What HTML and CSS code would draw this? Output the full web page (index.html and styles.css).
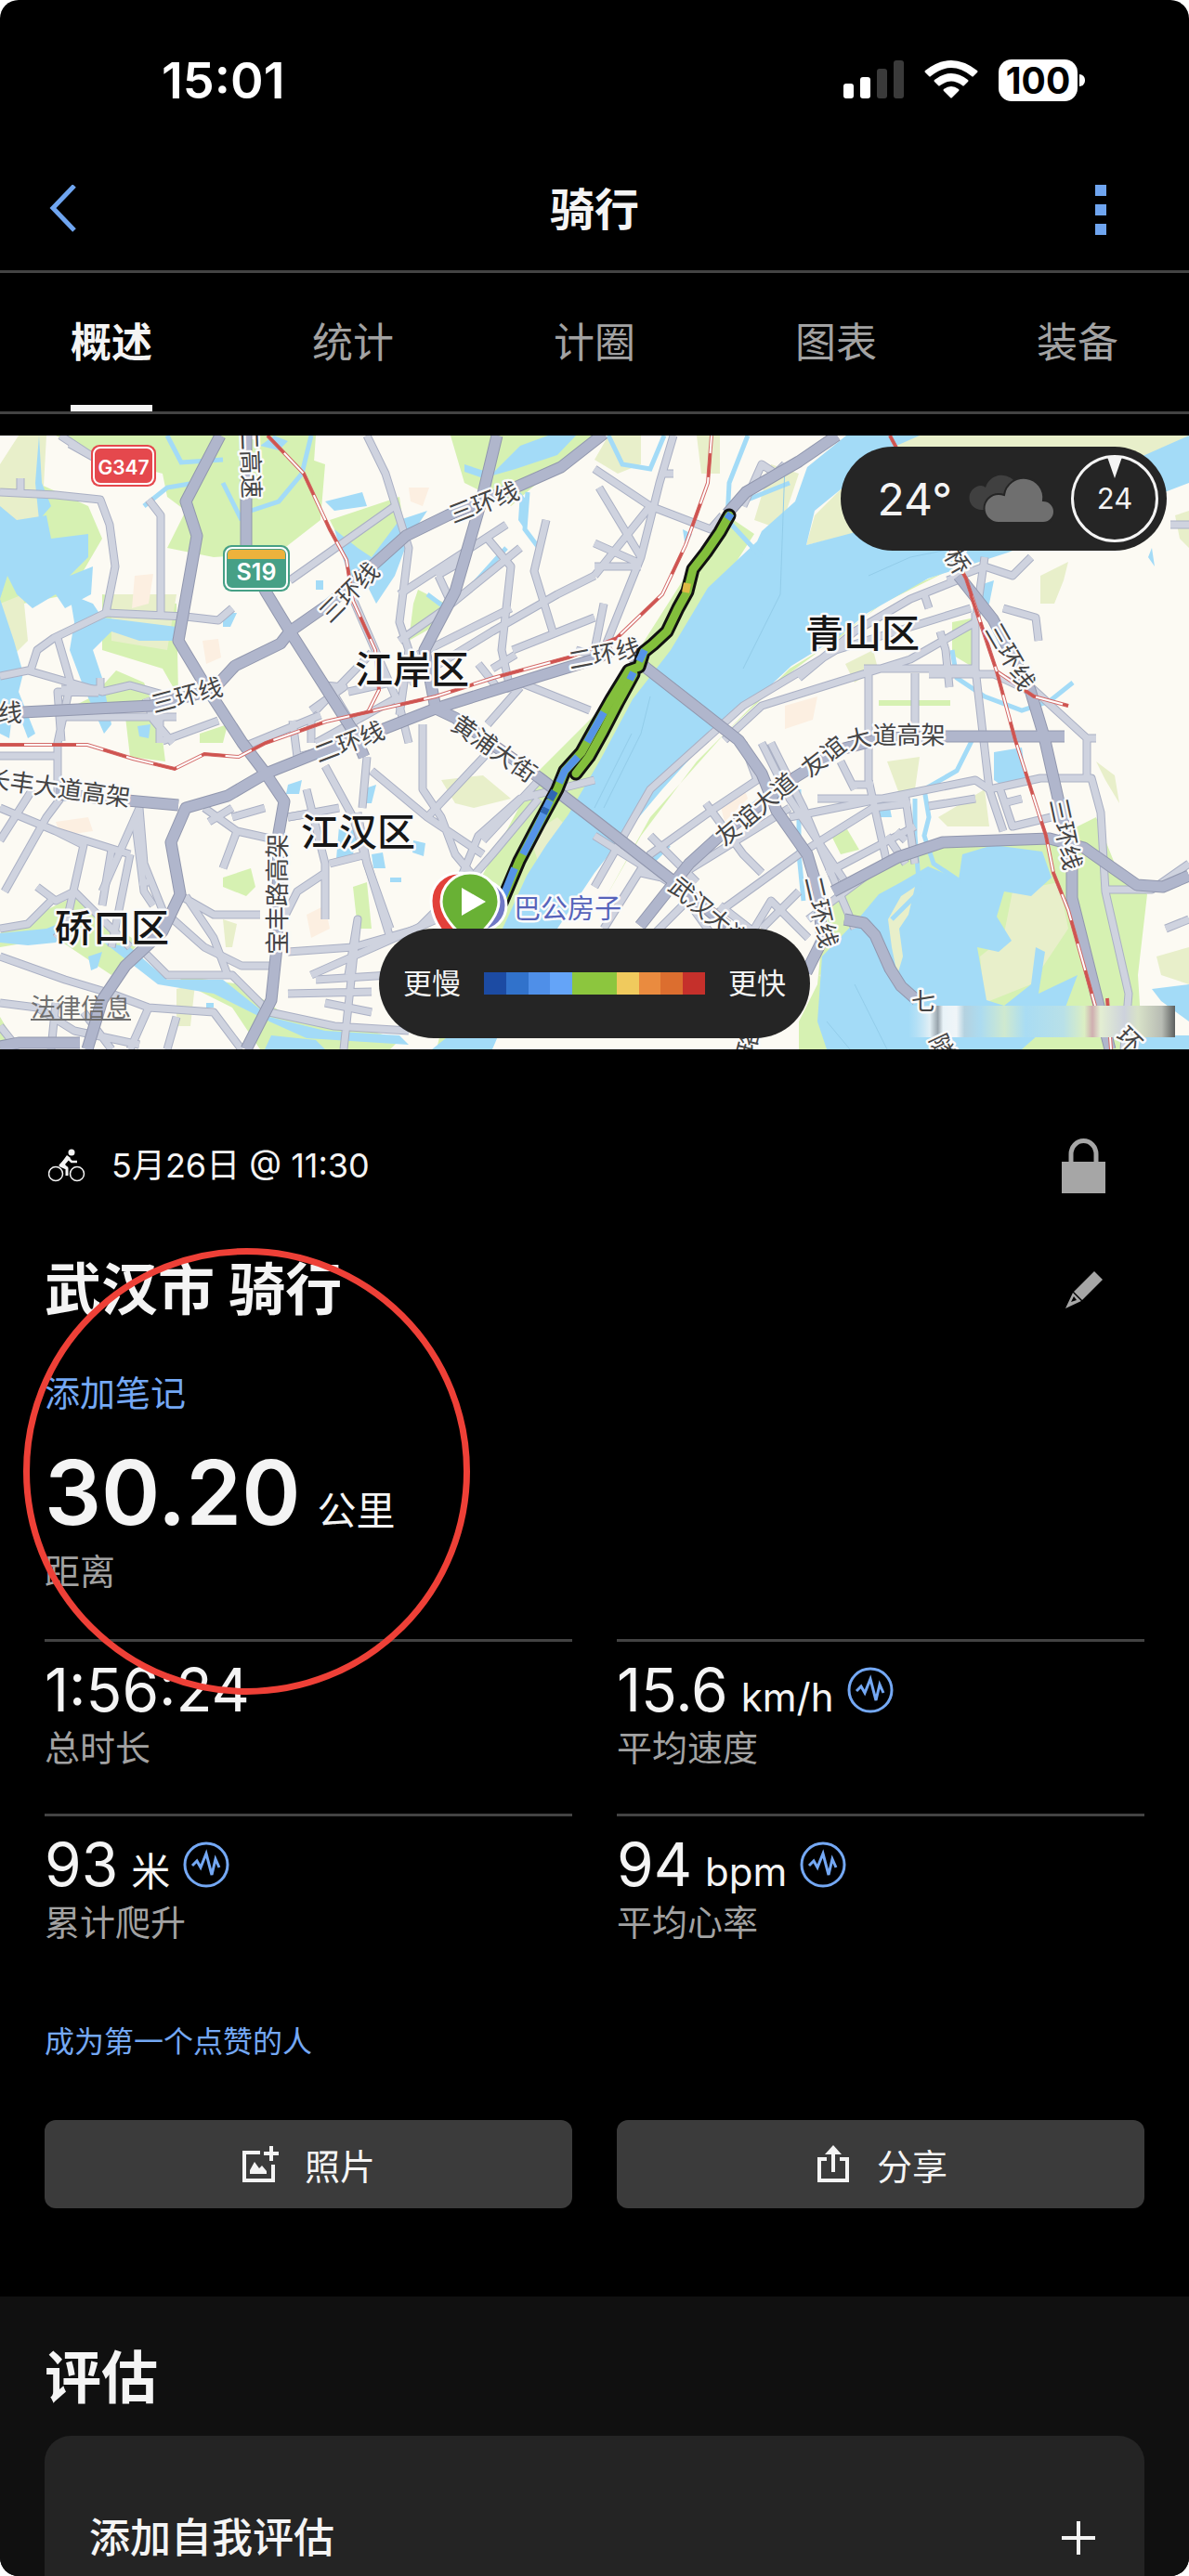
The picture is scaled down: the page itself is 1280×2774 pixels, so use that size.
FILE: index.html
```html
<!DOCTYPE HTML>
<html lang="zh-CN">
<head>
    <meta charset="utf-8"/>
    <meta name="viewport" content="width=device-width, initial-scale=1">
    <title>骑行</title>
    <link rel="stylesheet" href="styles.css">
</head>
<body>
<div class="app">
    <div class="status">
        <span class="time">15:01</span>
        <div class="status-icons">
            <svg width="65" height="42" viewBox="0 0 65 42">
                <rect x="0" y="25" width="11" height="16" rx="3" fill="#fff"/>
                <rect x="18" y="18" width="11" height="23" rx="3" fill="#fff"/>
                <rect x="36" y="9" width="11" height="32" rx="3" fill="#3a3a3a"/>
                <rect x="54" y="0" width="11" height="41" rx="3" fill="#3a3a3a"/>
            </svg>
            <svg width="58" height="42" viewBox="0 0 58 42" fill="#fff">
                <path d="M1 11Q29-11 57 11Q58 12 57 13L53 17Q52 18 51 17Q29-1 7 17Q6 18 5 17L1 13Q0 12 1 11Z"/>
                <path d="M11 21Q29 7 47 21Q48 22 47 23L43 27Q42 28 41 27Q29 18 17 27Q16 28 15 27L11 23Q10 22 11 21Z"/>
                <path d="M21 31Q29 25 37 31Q38 32 37 33L30 40Q29 41 28 40L21 33Q20 32 21 31Z"/>
            </svg>
            <span class="battery">100</span>
        </div>
    </div>

    <header class="header">
        <button class="back" aria-label="返回">
            <svg width="32" height="54" viewBox="0 0 32 54" fill="none" stroke="#6fa5f0" stroke-width="5"><path d="M28 1L5 25L28 49"/></svg>
        </button>
        <h1>骑行</h1>
        <button class="more" aria-label="更多">
            <svg width="12" height="54" viewBox="0 0 12 54" fill="#6fa5f0"><path d="M0 0h12v12H0zM0 21h12v12H0zM0 42h12v12H0z"/></svg>
        </button>
    </header>

    <nav class="tabs">
        <a href="#" class="tab active">概述</a>
        <a href="#" class="tab">统计</a>
        <a href="#" class="tab">计圈</a>
        <a href="#" class="tab">图表</a>
        <a href="#" class="tab">装备</a>
    </nav>

    <section class="map">
        <svg class="map-canvas" viewBox="0 469 1280 661" preserveAspectRatio="xMidYMid slice">
            <defs>
                <g id="streets">
                    <path d="M0 530L60 533L108 538L118 565L124 610L114 660L200 664L235 668L250 655M75 478L100 492L65 469M22 515V530"/>
                    <path d="M160 538L173 555V660M114 660L58 687L40 700L32 725M0 728L30 722L110 745L140 738L190 752M62 687L76 735L62 800V860M66 798L62 745L106 746"/>
                    <path d="M157 752L165 775L186 800M64 814H0M66 742L108 742V730M64 772H190M172 775V800M235 776L175 798"/>
                    <path d="M395 469L415 510L440 590L430 670L440 700L430 770M312 625L425 545M430 690L480 655L560 590M380 645L430 760L440 800"/>
                    <path d="M430 640L545 565M440 735L530 680L600 640L640 620M450 705L550 655M525 580L550 610L540 700L550 745M588 560L575 615L595 680M470 620L500 603M472 620L485 648"/>
                    <path d="M335 765L370 740L350 738M340 765L400 703M355 740L385 790M340 800L430 750M375 745L420 735M552 700L640 665M555 705L530 720M620 700L640 705M560 735L635 765M560 740L525 780M515 715L535 740"/>
                    <path d="M315 776L320 815L380 800M335 776V800M265 803L345 770M455 780V850L475 880L490 920L515 950M395 815L390 870M350 825L380 880L420 1010M365 870L310 880M400 830L460 880L520 920"/>
                    <path d="M640 840L560 860L515 900L490 960L450 1000L380 1020L310 1025M580 860L530 920L495 960M535 800L460 880M585 835L520 905M450 1000L420 1050L340 1055"/>
                    <path d="M0 870L60 895L140 920M60 895L90 910L70 1000L60 1010M0 905L35 850M5 960L50 880L65 860M110 960L150 870L155 930L175 980L220 1020L260 1040H300M40 955L60 970L80 960L140 1020"/>
                    <path d="M120 915L110 975M140 920L120 1020M150 950H160M145 880L155 960L165 975M0 1000L30 995L55 970M200 965L230 1010L245 1050M195 965L230 985L280 985"/>
                    <path d="M220 870L255 895L300 905M255 895L240 935M225 885L250 870M250 880L285 870M310 880L340 875M330 850L350 930L350 990M385 875L395 930L420 1000M355 930L395 920M350 940L320 960L305 990"/>
                    <path d="M0 1030L70 1055L120 1070L160 1085L230 1090L260 1130M150 1020L180 1050L250 1050L290 1090L360 1105L440 1110M375 1050L385 990L370 1130M310 1070L400 1068M335 1050L380 1030L470 990"/>
                    <path d="M0 1080L40 1085L80 1110L150 1125M60 1080L55 1130M90 1090L120 1130M160 1085L140 1130M190 1095L180 1130M350 1080L400 1090M0 1105L20 1130"/>
                    <path d="M725 469L710 520L690 600L670 650L650 700M640 505L700 545L765 570L778 555M700 545L640 620M645 525L690 600M640 585L685 605M640 610L690 610M650 650L640 700M725 510H712"/>
                    <path d="M800 545L820 500L835 510L845 500M640 955L700 850L800 760L900 700L1045 655M1030 625L980 645L920 680L860 730M1110 600L1090 620L1060 610L1020 625M995 640L1000 655"/>
                    <path d="M780 797L820 760L980 710L1050 670L1060 600M930 720H1050M985 725V800M935 725V840L955 930M1012 680L1018 700L1022 740M1000 726H1070L1110 745M1050 660V720L1065 850L1080 895"/>
                    <path d="M1080 655L1115 665L1118 690M1110 740L1170 795H1180M1065 850L1120 838H1175L1185 875L1190 960L1215 1070L1210 1130M1170 795V840M1075 845L1090 890L1140 878M1050 860L1000 868M1080 865L1100 860"/>
                    <path d="M800 800L815 840L770 870L700 920L650 1000M820 800L850 860L910 950M830 800L865 870L920 1000M850 880L1050 840L1065 850M640 900L720 950M690 940L735 950M880 860L975 860L985 930"/>
                    <path d="M770 985L860 920L940 870L980 865M700 900L750 950M760 865L800 920L820 940M890 940L985 890M920 850L905 820M940 845L915 845M720 950L850 870M775 975L820 1010M800 1020L830 970L870 1010"/>
                    <path d="M820 1000L860 960M690 1020L740 970L790 1040M870 990L950 930M1255 1000L1280 990M1190 958H1240L1280 930M1260 565H1280M955 900L975 930M965 895L975 905"/>
                </g>
                <g id="highways">
                    <path d="M237 469L200 540L212 577L192 690L222 740L261 800L286 833L306 863L300 897L298 1020L292 1077L265 1130"/>
                    <path d="M265 469V593L286 637L312 680L380 787L392 815"/>
                    <path d="M0 768L24 767L163 760L229 743L253 717L302 693L312 680L355 650L408 603L437 577L482 555L518 540L559 523L604 503L650 467"/>
                    <path d="M535 469L518 540L490 637L457 700L469 763L490 773L580 837L640 883L730 953L783 997"/>
                    <path d="M660 700L640 710L584 727L469 763L408 787L351 807L286 833L245 857L200 870L184 907L194 963L175 1003L135 1040L110 1077L94 1130"/>
                    <path d="M680 707L795 797L820 833L836 873L869 920L881 960L885 1013L868 1047"/>
                    <path d="M901 469L860 497L803 530L783 553"/>
                    <path d="M689 997L742 930L775 900L856 837L905 807L950 795L1020 793H1146"/>
                    <path d="M897 960L967 923L1015 907L1130 903L1167 913L1224 953L1252 955L1280 943"/>
                    <path d="M1032 620L1069 667L1109 743L1124 793L1142 873L1154 933V967L1183 1083L1195 1130"/>
                    <path d="M909 990L930 994L942 1007L958 1043L970 1062L987 1077M60 855L192 867M0 1127L20 1123L86 1123"/>
                </g>
                <g id="rails">
                    <path d="M288 469L327 510L355 570L373 603L380 647L404 700L408 743L396 767"/>
                    <path d="M0 802H94L143 817L188 828L220 812L257 815L286 800L351 777L469 750L531 730L612 708L664 687L713 640L738 587L762 520L766 469"/>
                    <path d="M958 469L1040 623L1073 723L1093 797L1126 900L1134 940L1150 980L1179 1083M1045 640L1073 723L1113 750L1150 760M1192 1075L1196 1130"/>
                </g>
                <path id="track" d="M785 555L775 573L760 595L746 613L740 637L730 655L718 680L703 694L693 702L688 718L677 722L658 753L641 783L626 810L608 830L600 850L580 887L559 927L540 972"/>
                <path id="track-back" d="M682 726L665 757L649 788L634 815L620 833"/>
                <path id="viaduct" d="M872 838L905 812Q930 802 950 801H1060"/>
                <linearGradient id="smear">
                    <stop offset="0" stop-color="#c8e6f3" stop-opacity="0"/>
                    <stop offset=".08" stop-color="#e2eff5"/>
                    <stop offset=".11" stop-color="#98a4ac"/>
                    <stop offset=".13" stop-color="#e9f3f8"/>
                    <stop offset=".18" stop-color="#f0f5f8"/>
                    <stop offset=".21" stop-color="#b4d2e0"/>
                    <stop offset=".27" stop-color="#acdbf0"/>
                    <stop offset=".36" stop-color="#cfe9cf"/>
                    <stop offset=".44" stop-color="#a9dcf3"/>
                    <stop offset=".58" stop-color="#b8e0e8"/>
                    <stop offset=".66" stop-color="#dbeec3"/>
                    <stop offset=".69" stop-color="#cfaeb0"/>
                    <stop offset=".72" stop-color="#e3eed2"/>
                    <stop offset=".81" stop-color="#cdd2dc"/>
                    <stop offset=".86" stop-color="#d8e2c8"/>
                    <stop offset=".95" stop-color="#b8bcb4"/>
                    <stop offset="1" stop-color="#5d605f"/>
                </linearGradient>
            </defs>

            <rect class="land" y="469" width="1280" height="661"/>

            <!-- parks and fields -->
            <g class="park">
                <path d="M60 469H260L350 500L345 560L300 595L230 600L180 590L200 550L180 535L175 510L100 490Z"/>
                <path d="M0 560L40 520L95 545L110 580L75 640L25 650L0 700Z"/>
                <path d="M280 469H340L335 540L290 580L270 560ZM355 560L430 535L435 570L400 600L370 590Z"/>
                <path d="M110 640L190 650L192 750L175 720L110 700ZM125 722L155 735L165 760L70 765L100 750Z"/>
                <path d="M485 469H560L640 469L590 510L550 545L500 520ZM450 635L480 650L475 670L440 690L445 650Z"/>
                <path d="M135 772H172L178 820L140 815ZM215 790L245 780L240 800H215Z"/>
                <path d="M812 575L770 640L720 720L660 830L600 960L550 1040L500 1130H470L510 960L580 830L650 760L700 680L770 570L790 560Z"/>
                <path d="M1020 615L960 640L900 690L850 720L800 770L750 820L690 900L650 970L700 880L780 790L850 725L950 650Z"/>
                <path d="M40 985L80 965L110 990L150 1015L120 1050L60 1010L0 1020V1005ZM0 1095L12 1115L0 1130Z"/>
                <path d="M160 1020L190 1050L260 1060L310 1095L400 1110L430 1120L420 1130H280L250 1085L200 1060Z"/>
                <path d="M240 945L270 935L275 955L265 965L240 955ZM380 955L395 950L400 1000H385Z"/>
                <path d="M900 960L960 925L1020 910L1130 905L1180 880L1200 930L1235 963L1225 1050L1230 1130H930L860 1130L860 1100L880 1060L885 1010Z"/>
                <path d="M895 900L912 893L925 915L905 920ZM1025 670L1050 665V720L1025 705ZM946 754H1023V760H946Z"/>
            </g>
            <g class="field">
                <path d="M20 469H50L45 560L10 600L0 560V500ZM120 640H190L180 700L120 690ZM0 650L25 640L30 690L0 720Z"/>
                <path d="M868 587L877 555L905 527L930 500L980 469H1280V485L1210 530L1040 565L940 570Z"/>
                <path d="M655 469H690V500L665 510L640 495ZM750 469H775V510H755ZM830 500L860 510L840 570L812 560Z"/>
                <path d="M475 840L520 835L550 860L510 870L490 865ZM570 900L600 880L610 890L580 930ZM910 715L940 700L945 720L920 735Z"/>
                <path d="M1120 620L1150 605L1145 625L1135 650L1120 650ZM1265 555L1280 550V590L1270 580ZM1180 820L1200 835L1205 865L1190 840Z"/>
                <path d="M955 820L990 815L985 850L970 860ZM1010 880L1060 850L1065 890L1020 890ZM1090 960L1140 950L1150 1000L1110 1060L1060 1080L1055 1030L1080 1010Z"/>
                <path d="M1245 1030L1280 1020V1060L1250 1050ZM240 990L255 995L250 1020H243ZM190 1065L210 1060L205 1105H190ZM880 1050L915 1045L900 1060Z"/>
                <path d="M960 560L1000 590L900 600Z"/>
            </g>
            <g class="built">
                <path d="M145 620L165 618L160 650L142 655ZM218 690L235 688L238 708L222 715ZM440 525H462L455 545L442 540Z"/>
                <path d="M845 760L880 750L875 775L845 785ZM60 885L95 880L100 895L65 900ZM330 985L350 975L355 1000L335 1010ZM775 865L800 845L805 860L780 885Z"/>
            </g>

            <!-- rivers and lakes -->
            <g class="water">
                <path d="M911 469L869 503L856 540L820 572L815 583L762 633L722 700L681 753L648 815L612 877L588 910L567 943L547 987L490 1110L465 1130H530L560 1060L600 1000L640 940L677 893L713 850L758 800L803 763L852 717L901 687L934 660L999 623L1085 595L1280 520V469L1210 500L1100 560L940 568L868 587L877 550L905 527L965 480L990 469Z"/>
                <path d="M0 545L18 560L50 555L55 580L95 575V600L75 620L100 610L98 640L70 655L60 640L35 655L18 640L8 620L0 645Z"/>
                <path d="M75 640L100 650L110 665L190 675L196 690L150 690L120 680L100 700L110 730L120 780L112 790L90 740L75 700L80 670Z"/>
                <path d="M0 645L15 690L25 725L20 745L38 790L30 795L15 755L10 795L0 790ZM42 469L45 520L55 545L42 560L38 520Z"/>
                <path d="M360 570L385 590L400 600L430 560L460 550L440 580L425 620L405 650L395 630L375 620ZM350 540L390 530L395 545L360 550Z"/>
                <path d="M500 500L530 510L560 480L590 469H620L600 490L555 505L520 515L500 508ZM295 469L310 475L300 485L280 480ZM560 530L568 540L565 570L558 560Z"/>
                <path d="M885 1030L926 987L946 963L970 950L999 933L1032 947L1036 920L1069 910L1122 917L1132 945L1110 965L1081 960L1073 987L1089 1013L1075 1025L1052 1020L1062 1077L1081 1083L1110 1060L1115 1020L1125 1025L1118 1070L1160 1050L1145 1090L1100 1130H890L880 1100Z"/>
                <path d="M1070 810L1100 805L1105 840L1085 850L1070 840ZM1240 1065L1280 1060V1100L1250 1078ZM1055 630L1070 625L1065 650L1055 660Z"/>
                <path d="M0 1005L50 1000L75 990L60 1015L30 1018L0 1015ZM95 1030L110 1025L105 1042L98 1045ZM112 1015L140 1020L180 1055L240 1055L290 1095L350 1110L430 1115L440 1125L330 1118L290 1100L230 1070L170 1060Z"/>
                <path d="M390 850L405 845L400 865H390ZM400 920L412 918L415 935L402 935ZM445 905L458 908L456 922L444 918ZM420 945H432V950H420ZM310 845L325 840L322 855L308 855ZM365 890L385 895L380 920L362 925ZM292 1115L340 1120L350 1130H285ZM148 782L162 780L160 795L150 793ZM222 1080H230V1085H222Z"/>
                <path d="M945 870L955 855L960 880H945ZM240 660H255L248 675H240ZM340 625H348V635H340ZM1240 590L1243 610L1236 600ZM735 570L745 575L738 590ZM1215 1115H1280V1130H1220Z"/>
            </g>
            <g class="field">
                <path d="M985 955L978 985L968 1000L972 1030L966 1050L960 1020L956 990L970 965Z"/>
            </g>
            <g class="stream">
                <path d="M180 469L195 498L240 495M335 469L325 510L300 540L270 550M155 545L180 525L210 520M240 520L260 560"/>
                <path d="M655 469L670 500L700 505L715 469M805 469L785 520L783 560L820 600M775 560L800 540L850 520M568 530L565 570L580 590M545 590L500 640M460 640L480 655"/>
                <path d="M1050 790L1030 830L995 850L1000 880L995 900L1005 930L1035 950M860 850V920L865 970M1025 700L1030 730L1060 750L1100 765L1130 755L1155 735M985 860V900L990 960L960 990M700 930L720 910"/>
            </g>
            <g class="water-line"><path d="M845 500L840 640L800 720M650 870L690 790L700 750M920 1060L955 1130M890 1100L915 1130M640 870L680 790M935 620L980 600L1030 590"/></g>

            <use href="#streets" class="street-edge"/>
            <use href="#streets" class="street"/>
            <use href="#highways" class="highway-edge"/>
            <use href="#highways" class="highway"/>
            <use href="#rails" class="rail-edge"/>
            <use href="#rails" class="rail"/>
            <use href="#rails" class="rail-dash"/>
            <rect x="978" y="1083" width="287" height="34" fill="url(#smear)"/>

            <!-- road and district names -->
            <g class="road-name">
                <text transform="translate(259 459) rotate(88)">二高速</text>
                <text transform="translate(488 564) rotate(-21)">三环线</text>
                <text transform="translate(355 672) rotate(-45)">三环线</text>
                <text transform="translate(166 768) rotate(-15)">三环线</text>
                <text x="-2" y="777">线</text>
                <text transform="translate(343 822) rotate(-21)">二环线</text>
                <text transform="translate(614 721) rotate(-11)">二环线</text>
                <text transform="translate(484 784) rotate(35)">黄浦大街</text>
                <text transform="translate(-16 847) rotate(8)">长丰大道高架</text>
                <text transform="translate(308 1028) rotate(-90)">宝丰路高架</text>
                <text transform="translate(1016 598) rotate(60)">桥</text>
                <text transform="translate(1060 678) rotate(60)">三环线</text>
                <text transform="translate(1130 862) rotate(78)">三环线</text>
                <text transform="translate(780 912) rotate(-40)">友谊大道</text>
                <text><textPath href="#viaduct">友谊大道高架</textPath></text>
                <text transform="translate(718 957) rotate(40)">武汉大道</text>
                <text transform="translate(866 946) rotate(77)">二环线</text>
                <text transform="translate(1000 1119) rotate(65)">隧</text>
                <text transform="translate(1200 1117) rotate(45)">环</text>
                <text transform="translate(811 1136) rotate(-75)">珞</text>
                <text x="981" y="1088">七</text>
            </g>
            <g class="district">
                <text x="382" y="736">江岸区</text>
                <text x="324" y="911">江汉区</text>
                <text x="59" y="1014">硚口区</text>
                <text x="867" y="697">青山区</text>
            </g>

            <!-- route shields -->
            <rect x="98" y="479" width="70" height="45" rx="9" fill="#e5484d"/>
            <rect x="101" y="482" width="64" height="39" rx="7" fill="none" stroke="#fff" stroke-width="2"/>
            <text class="shield" x="133" y="511">G347</text>
            <rect x="240" y="587" width="72" height="50" rx="9" fill="#46a086"/>
            <path d="M245 602V597Q245 592 250 592H302Q307 592 307 597V602Z" fill="#edb23c"/>
            <rect x="243" y="590" width="66" height="44" rx="7" fill="none" stroke="#fff" stroke-width="2"/>
            <text class="shield shield-lg" x="276" y="625">S19</text>

            <!-- recorded track, coloured by speed -->
            <g class="track-edge">
                <use href="#track-back"/>
                <use href="#track"/>
            </g>
            <g class="track">
                <use href="#track-back"/>
                <use href="#track"/>
            </g>
            <g class="track-slow">
                <path d="M787 553L783 559M694 700L688 712M682 724L678 732M650 767L641 783L632 799M622 815L608 830L602 843M592 862L580 887L563 920M554 935L542 965"/>
            </g>
            <path d="M740 628L738 638" stroke="#e0ba45" stroke-width="8"/>
            <path d="M597 852L592 861M588 870L585 876" stroke="#2f66b3" stroke-width="8"/>

            <text class="poi" x="553" y="989">巴公房子</text>
            <circle cx="518" cy="975" r="27" fill="#7078c5" stroke="#fff" stroke-width="3"/>
            <path d="M492 1020Q464 996 464 970A30 30 0 0 1 524 970Z" fill="#e2403a" stroke="#fff" stroke-width="3"/>
            <path d="M506 1015Q475 990 475 971A31 31 0 0 1 537 971Q537 990 506 1015Z" fill="#69b135" stroke="#fff" stroke-width="3"/>
            <path d="M497 956V986L523 971Z" fill="#fff"/>
        </svg>

        <div class="weather">
            <span class="temp">24°</span>
            <svg width="94" height="53" viewBox="0 0 94 53">
                <path d="M15 38A13 13 0 0 1 14 12Q17 12 19 14A18 18 0 0 1 53 12V38Z" fill="#404040"/>
                <path d="M33 52A15 15 0 0 1 33 21Q36 21 39 22A21 21 0 0 1 81 28A12 12 0 0 1 81 52Z" fill="#6f6f6f" stroke="#252525" stroke-width="2"/>
            </svg>
            <div class="wind">
                <span>24</span>
                <svg class="wind-mark" width="16" height="24" viewBox="0 0 16 24"><path d="M0 1Q8-1 16 1L8 24Z" fill="#f4f4f4"/></svg>
            </div>
        </div>

        <div class="legend">
            <span>更慢</span>
            <div class="scale">
                <i class="s1"></i><i class="s2"></i><i class="s3"></i><i class="s4"></i><i class="s5"></i><i class="s5"></i><i class="s6"></i><i class="s7"></i><i class="s8"></i><i class="s9"></i>
            </div>
            <span>更快</span>
        </div>
        <a href="#" class="legal">法律信息</a>
    </section>

    <main class="details">
        <div class="row meta">
            <svg width="40" height="36" viewBox="0 0 40 36">
                <g fill="none" stroke="#f4f4f4">
                    <circle cx="8" cy="27" r="7.5" stroke-width="1.5"/>
                    <circle cx="31" cy="27" r="7.5" stroke-width="1.5"/>
                    <path d="M21 10L13 18L20 21V29" stroke-width="3" stroke-linejoin="round"/>
                    <path d="M20 9L25 14H31" stroke-width="2.5"/>
                </g>
                <circle cx="25" cy="4" r="3.5" fill="#f4f4f4"/>
                <path d="M20 7L24 10L18 17L21 20L19 22L12 18Z" fill="#f4f4f4"/>
            </svg>
            <span class="date">5月26日 @ 11:30</span>
            <svg class="lock" width="47" height="60" viewBox="0 0 47 60">
                <path d="M10 28V18A13 14 0 0 1 37 18V28" fill="none" stroke="#a6a6a6" stroke-width="5"/>
                <path d="M0 26H47V60H0Z" fill="#a6a6a6"/>
            </svg>
        </div>
        <div class="row title">
            <h2>武汉市 骑行</h2>
            <button aria-label="编辑">
                <svg width="42" height="42" viewBox="0 0 42 42" fill="#a6a6a6"><path d="M32 1L41 10L19 32L10 23Z"/><path fill-rule="evenodd" d="M9 24L18 33L1 41ZM10 28L7 34L13 32Z"/></svg>
            </button>
        </div>
        <a href="#" class="note">添加笔记</a>
        <div class="distance"><strong>30.20</strong><span>公里</span></div>
        <p class="label">距离</p>

        <div class="stats">
            <div class="stat">
                <div class="value">1:56:24</div>
                <p class="label">总时长</p>
            </div>
            <div class="stat">
                <div class="value">15.6 <span>km/h</span>
                    <svg class="pulse" viewBox="0 0 50 50"><circle cx="25" cy="25" r="23"/><path d="M10 26L15 21L19 28L25 13L31 36L35 19L39 28"/></svg>
                </div>
                <p class="label">平均速度</p>
            </div>
            <div class="stat">
                <div class="value">93 <span>米</span>
                    <svg class="pulse" viewBox="0 0 50 50"><circle cx="25" cy="25" r="23"/><path d="M10 26L15 21L19 28L25 13L31 36L35 19L39 28"/></svg>
                </div>
                <p class="label">累计爬升</p>
            </div>
            <div class="stat">
                <div class="value">94 <span>bpm</span>
                    <svg class="pulse" viewBox="0 0 50 50"><circle cx="25" cy="25" r="23"/><path d="M10 26L15 21L19 28L25 13L31 36L35 19L39 28"/></svg>
                </div>
                <p class="label">平均心率</p>
            </div>
        </div>

        <a href="#" class="likes">成为第一个点赞的人</a>

        <div class="actions">
            <button class="action">
                <svg width="42" height="42" viewBox="0 0 42 42">
                    <path d="M20 8H3V38H34V21M32 1V17M24 9H40" fill="none" stroke="#f4f4f4" stroke-width="4"/>
                    <path d="M9 31V27L14 18L19 25L22 22L27 28V31Z" fill="#f4f4f4"/>
                </svg>
                照片
            </button>
            <button class="action">
                <svg width="42" height="42" viewBox="0 0 42 42">
                    <path d="M14 15H6V38H36V15H28M21 5V29" fill="none" stroke="#f4f4f4" stroke-width="4"/>
                    <path d="M21 0L30 10H12Z" fill="#f4f4f4"/>
                </svg>
                分享
            </button>
        </div>
        <div class="ring"></div>
    </main>

    <section class="review">
        <h2>评估</h2>
        <button class="card">
            <span>添加自我评估</span>
            <svg width="36" height="36" viewBox="0 0 36 36" stroke="#f4f4f4" stroke-width="4"><path d="M18 0V36M0 18H36"/></svg>
        </button>
    </section>
</div>
</body>
</html>
```
FILE: styles.css
```css
* {
    box-sizing: border-box;
}

body {
    margin: 0;
    background-color: #fff;
    font-family: Inter, "Noto Sans CJK SC", sans-serif;
    color: #f4f4f4;
}

h1, h2, p {
    margin: 0;
    font-weight: 600;
}

a {
    color: #74a8f4;
    text-decoration: none;
}

button {
    border: none;
    padding: 0;
    background: none;
    color: inherit;
    font-family: inherit;
}

svg {
    display: block;
    flex: none;
}

.app {
    background-color: #000;
    border-radius: 20px;
    overflow: hidden;
}

/* status bar */
.status {
    display: flex;
    justify-content: space-between;
    height: 160px;
    padding: 52px 112px 0 174px;
}

.time {
    font-size: 54px;
    font-weight: 600;
    line-height: 70px;
    color: #fff;
}

.status-icons {
    display: flex;
    align-items: center;
    gap: 22px;
    height: 68px;
}

.battery {
    position: relative;
    width: 85px;
    border-radius: 14px;
    background-color: #fff;
    color: #000;
    font-size: 39px;
    font-weight: 700;
    line-height: 45px;
    text-align: center;
    margin-right: 8px;
}

.battery::after {
    content: "";
    position: absolute;
    left: 87px;
    top: 16px;
    width: 6px;
    height: 13px;
    border-radius: 0 6px 6px 0;
    background-color: #fff;
}

/* header and tabs */
.header {
    display: grid;
    grid-template-columns: 1fr auto 1fr;
    align-items: center;
    height: 134px;
    padding: 0 52px;
    border-bottom: 3px solid #434343;
}

.header h1 {
    font-size: 48px;
    line-height: 60px;
}

.back {
    justify-self: start;
}

.more {
    justify-self: end;
    margin-right: 37px;
}

.tabs {
    display: flex;
    justify-content: space-between;
    height: 152px;
    padding: 0 76px;
    border-bottom: 3px solid #434343;
    margin-bottom: 23px;
}

.tab {
    border-top: 7px solid transparent;
    border-bottom: 7px solid transparent;
    color: #a2a2a2;
    font-size: 44px;
    line-height: 137px;
}

.active {
    border-bottom-color: #f4f4f4;
    color: #f4f4f4;
    font-weight: 600;
}

/* map */
.map {
    position: relative;
}

.map-canvas {
    width: 100%;
    height: auto;
}

.land { fill: #fcfaf3; }
.park { fill: #d6f1b2; }
.field { fill: #e8efca; }
.built { fill: #fcefe1; }
.water { fill: #a3dbf7; }

.stream, .water-line {
    fill: none;
    stroke: #a3dbf7;
    stroke-width: 5px;
}

.water-line {
    stroke: #92cce9;
    stroke-width: 1px;
}

.street, .street-edge, .highway, .highway-edge {
    fill: none;
    stroke-linejoin: round;
}

.street-edge { stroke: #aab0c4; stroke-width: 9px; }
.street { stroke: #cfd3df; stroke-width: 7px; }
.highway-edge { stroke: #9197ae; stroke-width: 13px; }
.highway { stroke: #b0b6cc; stroke-width: 11px; }

.rail, .rail-edge, .rail-dash {
    fill: none;
}

.rail-edge { stroke: #d36a68; stroke-width: 4px; }
.rail { stroke: #fff; stroke-width: 2px; }
.rail-dash { stroke: #cf5450; stroke-width: 3px; stroke-dasharray: 26 30; }

.track-edge, .track, .track-slow {
    fill: none;
    stroke: #111;
    stroke-width: 15px;
    stroke-linecap: round;
    stroke-linejoin: round;
}

.track {
    stroke: #83bf3c;
    stroke-width: 9px;
}

.track-slow {
    stroke: #5594e8;
    stroke-width: 8px;
    stroke-linecap: butt;
}

.road-name, .district, .poi {
    stroke: #fafafa;
    stroke-width: 5px;
    stroke-linejoin: round;
    paint-order: stroke;
}

.road-name {
    fill: #444;
    font-size: 26px;
}

.district {
    fill: #161616;
    font-size: 41px;
    font-weight: 500;
}

.poi {
    fill: #5663ba;
    font-size: 29px;
}

.shield {
    fill: #fff;
    font-size: 21px;
    font-weight: 600;
    text-anchor: middle;
}

.shield-lg {
    font-size: 25px;
}

.weather {
    position: absolute;
    top: 12px;
    right: 24px;
    display: flex;
    align-items: center;
    gap: 17px;
    height: 112px;
    padding: 0 9px 0 40px;
    border-radius: 56px;
    background-color: #252525;
}

.temp {
    font-size: 48px;
}

.wind {
    position: relative;
    width: 94px;
    height: 94px;
    border: 3px solid #f4f4f4;
    border-radius: 50%;
    font-size: 31px;
    line-height: 88px;
    text-align: center;
}

.wind-mark {
    position: absolute;
    left: 36px;
    top: -2px;
}

.legend {
    position: absolute;
    left: 50%;
    bottom: 12px;
    transform: translateX(-50%);
    display: flex;
    align-items: center;
    gap: 25px;
    height: 118px;
    padding: 0 26px;
    border-radius: 59px;
    background-color: #252525;
    font-size: 31px;
    line-height: 36px;
    white-space: nowrap;
}

.scale {
    display: flex;
    width: 238px;
    height: 24px;
}

.scale i {
    flex: 1;
}

.s1 { background-color: #1c4ba3; }
.s2 { background-color: #3172cb; }
.s3 { background-color: #4f8fe8; }
.s4 { background-color: #64a4f8; }
.s5 { background-color: #8cc63e; }
.s6 { background-color: #f0ca5d; }
.s7 { background-color: #ea8b3f; }
.s8 { background-color: #dc6e2f; }
.s9 { background-color: #c5302b; }

.legal {
    position: absolute;
    left: 33px;
    bottom: 26px;
    color: #6f6f6f;
    font-size: 27px;
    line-height: 36px;
    text-decoration: underline;
}

/* activity details */
.details {
    position: relative;
    padding: 95px 48px;
}

.row {
    display: flex;
    align-items: center;
}

.meta {
    gap: 28px;
    height: 60px;
    padding: 0 42px 0 4px;
}

.date {
    font-size: 36px;
    line-height: 44px;
}

.lock {
    margin-left: auto;
}

.title {
    justify-content: space-between;
    height: 80px;
    margin-top: 64px;
    padding-right: 44px;
}

h2 {
    font-size: 61px;
    line-height: 80px;
}

.note {
    display: block;
    margin-top: 46px;
    font-size: 38px;
    line-height: 50px;
}

.distance {
    display: flex;
    align-items: baseline;
    gap: 18px;
    height: 120px;
    margin-top: 22px;
    font-size: 42px;
    line-height: 120px;
}

.distance strong {
    font-size: 96px;
    font-weight: 600;
}

.label {
    color: #a2a2a2;
    font-size: 38px;
    font-weight: 400;
    line-height: 50px;
}

.stats {
    display: grid;
    grid-template-columns: 1fr 1fr;
    column-gap: 48px;
    margin-top: 48px;
}

.stat {
    height: 188px;
    padding-top: 15px;
    border-top: 3px solid #434343;
}

.value {
    display: flex;
    align-items: baseline;
    gap: 14px;
    height: 74px;
    font-size: 64px;
    line-height: 74px;
}

.value span {
    font-size: 42px;
}

.pulse {
    align-self: center;
    width: 50px;
    height: 50px;
    fill: none;
    stroke: #74a8f4;
    stroke-width: 3px;
}

.likes {
    display: block;
    margin-top: 36px;
    font-size: 32px;
    line-height: 44px;
}

.actions {
    display: grid;
    grid-template-columns: 1fr 1fr;
    gap: 48px;
    margin-top: 62px;
}

.action {
    display: flex;
    align-items: center;
    justify-content: center;
    gap: 26px;
    height: 95px;
    border-radius: 12px;
    background-color: #3b3b3b;
    font-size: 38px;
}

/* red highlight over the distance */
.ring {
    position: absolute;
    left: 25px;
    top: 214px;
    width: 481px;
    height: 481px;
    border: 7px solid #ee4037;
    border-radius: 50%;
    pointer-events: none;
}

/* self review */
.review {
    padding: 48px 48px 0;
    background-color: #101010;
}

.card {
    display: flex;
    align-items: center;
    justify-content: space-between;
    width: 100%;
    margin-top: 22px;
    padding: 80px 53px 11px 48px;
    border-radius: 28px 28px 0 0;
    background-color: #242424;
    font-size: 44px;
    font-weight: 500;
    line-height: 60px;
}
```
